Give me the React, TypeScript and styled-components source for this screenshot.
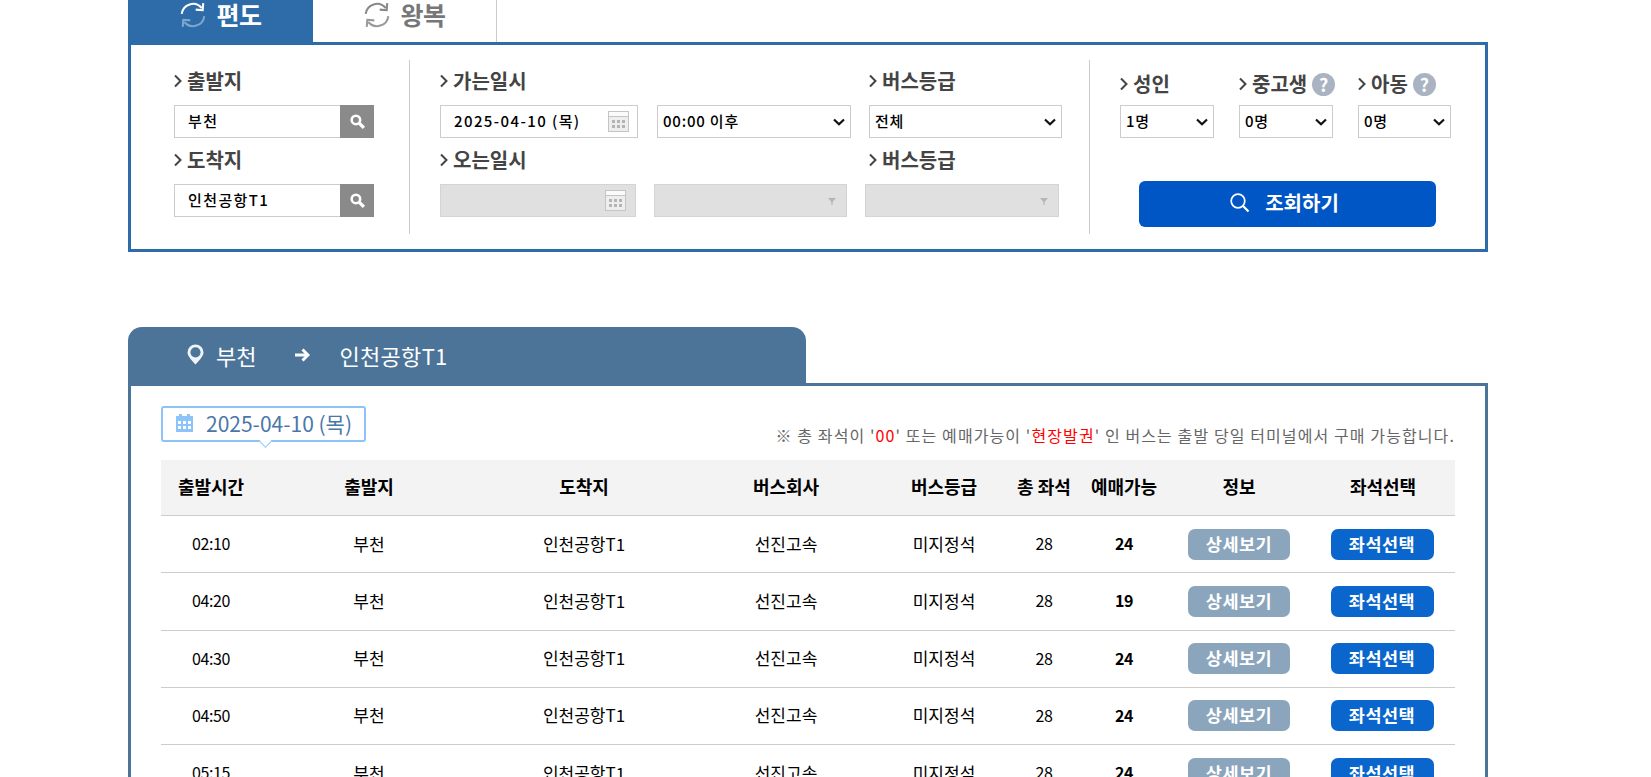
import styled, { createGlobalStyle } from "styled-components";

const FONT = `"Noto Sans CJK KR", "Noto Sans", "Liberation Sans", sans-serif`;

const SELECT_ARROW = `url("data:image/svg+xml,%3Csvg xmlns='http://www.w3.org/2000/svg' width='12' height='8' viewBox='0 0 12 8'%3E%3Cpath d='M1 1.5 L6 6.3 L11 1.5' fill='none' stroke='%23111' stroke-width='2.2'/%3E%3C/svg%3E")`;

const GlobalStyle = createGlobalStyle`
  html, body {
    margin: 0;
    padding: 0;
    height: 100%;
    overflow: hidden;
    background: #fff;
  }
  body {
    font-family: ${FONT};
    color: #000;
  }
  * {
    box-sizing: border-box;
  }
`;

const Page = styled.div`
  width: 1360px;
  margin-left: 128px;
`;

const TabBar = styled.div`
  display: flex;
  height: 42px;
`;

const Tab = styled.div<{ $active?: boolean }>`
  width: ${(p) => (p.$active ? "185px" : "184px")};
  display: flex;
  align-items: flex-start;
  justify-content: center;
  gap: 9px;
  padding-top: 1px;
  font-size: 25px;
  line-height: 26px;
  font-weight: 700;
  letter-spacing: -0.5px;
  background: ${(p) => (p.$active ? "#2d6ca8" : "#fff")};
  color: ${(p) => (p.$active ? "#fff" : "#777")};
  border-right: ${(p) => (p.$active ? "0" : "1px solid #ccc")};
`;

const SearchPanel = styled.div`
  display: flex;
  height: 210px;
  border: 3px solid #2d6ca8;
  padding-top: 15px;
`;

const Column = styled.div<{ $width: number; $pad: number; $last?: boolean }>`
  width: ${(p) => p.$width}px;
  height: 174px;
  padding: 9px 0 0 ${(p) => p.$pad}px;
  border-right: ${(p) => (p.$last ? "0" : "1px solid #ccc")};
  display: flex;
  flex-direction: column;
`;

const Label = styled.div`
  display: flex;
  align-items: center;
  gap: 5px;
  height: 24px;
  font-size: 20px;
  line-height: 22px;
  font-weight: 700;
  color: #444;
  white-space: nowrap;
`;

const LabelRow = styled.div`
  display: grid;
  grid-template-columns: 429px 1fr;
  margin-bottom: 12px;
`;

const LabelGap = styled.div`
  margin-bottom: 12px;
`;

const FieldRow = styled.div<{ $cols: string }>`
  display: grid;
  grid-template-columns: ${(p) => p.$cols};
  height: 33px;
  margin-bottom: 10px;
`;

const SearchField = styled.div`
  display: flex;
  width: 200px;
  height: 33px;
  margin-bottom: 10px;
  border: 1px solid #ccc;
  background: #fff;
`;

const TextInput = styled.input`
  flex: 1;
  min-width: 0;
  border: 0;
  outline: 0;
  padding: 0 0 2px 13px;
  background: transparent;
  font-family: ${FONT};
  font-size: 15px;
  font-weight: 500;
  letter-spacing: 1.4px;
  color: #000;
`;

const SearchButton = styled.button`
  width: 34px;
  margin: -1px -1px -1px 0;
  border: 0;
  padding: 0;
  background: #8a8a8a;
  display: flex;
  align-items: center;
  justify-content: center;
`;

const DateBox = styled.div`
  display: flex;
  align-items: center;
  height: 33px;
  padding-right: 8px;
  border: 1px solid #ccc;
  background: #fff;
`;

const DisabledBox = styled.div`
  display: flex;
  align-items: center;
  justify-content: flex-end;
  height: 33px;
  padding-right: 9px;
  border: 1px solid #d4d4d4;
  background: #e0e0e0;
`;

const Select = styled.select`
  width: 100%;
  height: 33px;
  border: 1px solid #ccc;
  border-radius: 0;
  outline: 0;
  appearance: none;
  padding: 0 0 2px 5px;
  background: #fff ${SELECT_ARROW} no-repeat right 5px center;
  font-family: ${FONT};
  font-size: 15px;
  font-weight: 500;
  letter-spacing: 0.8px;
  color: #000;
`;

const PeopleLabels = styled.div`
  display: grid;
  grid-template-columns: repeat(3, 119px);
  margin-top: 3px;
  margin-bottom: 9px;
`;

const PeopleSelects = styled.div`
  display: grid;
  grid-template-columns: repeat(3, 119px);
`;

const PeopleSelect = styled(Select)`
  width: 94px;

  &:last-child {
    width: 93px;
  }
`;

const HelpBadge = styled.span`
  width: 23px;
  height: 23px;
  border-radius: 50%;
  background: #a9b3c2;
  color: #fff;
  font-size: 18px;
  line-height: 23px;
  font-weight: 700;
  text-align: center;
`;

const QueryButton = styled.button`
  width: 297px;
  height: 46px;
  margin: 43px 0 0 19px;
  padding: 0 6px 3px 0;
  border: 0;
  border-radius: 6px;
  background: #0056c4;
  color: #fff;
  display: flex;
  align-items: center;
  justify-content: center;
  gap: 15px;
  font-family: ${FONT};
  font-size: 20px;
  font-weight: 700;
`;

const RouteTab = styled.div`
  width: 678px;
  height: 57px;
  margin-top: 75px;
  padding: 0 0 2px 59px;
  border-radius: 14px 14px 0 0;
  background: #4c7499;
  color: #fff;
  display: flex;
  align-items: center;
  font-size: 22px;
  font-weight: 400;
`;

const RoutePlace = styled.span`
  margin-left: 12px;
`;

const RouteArrow = styled.span`
  display: flex;
  margin: 0 29px 0 39px;
`;

const RouteDestination = styled.span`
  letter-spacing: 0.3px;
`;

const ResultPanel = styled.div`
  margin-top: -1px;
  padding: 20px 30px 0;
  border: 3px solid #4c7499;
  border-bottom: 0;
  height: 480px;
`;

const ResultTop = styled.div`
  display: flex;
  justify-content: space-between;
  height: 54px;
`;

const DateBadge = styled.div`
  position: relative;
  width: 205px;
  height: 36px;
  border: 2px solid #8cc4fa;
  border-radius: 3px;
  padding: 0 0 2px 13px;
  display: flex;
  align-items: center;
  gap: 13px;
  color: #4b77a8;
  font-size: 21px;
  white-space: nowrap;

  &::after {
    content: "";
    position: absolute;
    left: 98px;
    bottom: -6px;
    width: 8px;
    height: 8px;
    background: #fff;
    border-right: 1px solid #8cc4fa;
    border-bottom: 1px solid #8cc4fa;
    transform: rotate(45deg);
  }
`;

const Notice = styled.div`
  align-self: flex-end;
  margin-bottom: 14px;
  font-size: 16px;
  line-height: 22px;
  letter-spacing: 1.1px;
  color: #666;
  white-space: nowrap;
`;

const Red = styled.span`
  color: #f00;
`;

const COLUMNS = "100px 216px 214px 190px 126px 74px 86px 144px 144px";

const HeaderRow = styled.div`
  display: grid;
  grid-template-columns: ${COLUMNS};
  height: 56px;
  align-items: center;
  padding-bottom: 3px;
  background: #f3f3f3;
  border-bottom: 1px solid #ccc;
  font-size: 18px;
  font-weight: 700;
  text-align: center;
  white-space: nowrap;
`;

const Row = styled.div`
  display: grid;
  grid-template-columns: ${COLUMNS};
  height: 57.25px;
  align-items: center;
  border-bottom: 1px solid #ccc;
  font-size: 17px;
  text-align: center;
`;

const TextCell = styled.div`
  padding-bottom: 2px;
`;

const NumberCell = styled(TextCell)<{ $bold?: boolean }>`
  font-size: 16px;
  letter-spacing: -0.4px;
  font-weight: ${(p) => (p.$bold ? 700 : 400)};
`;

const RowButton = styled.button<{ $primary?: boolean }>`
  justify-self: center;
  width: ${(p) => (p.$primary ? "103px" : "102px")};
  height: 31px;
  margin-right: ${(p) => (p.$primary ? "2px" : "0")};
  border: 0;
  border-radius: 7px;
  padding: 0 0 2px;
  background: ${(p) => (p.$primary ? "#0a66cc" : "#8ba5bd")};
  color: #fff;
  font-family: ${FONT};
  font-size: 17.5px;
  font-weight: 700;
  letter-spacing: 0.5px;
`;

function Chevron() {
  return (
    <svg width="8" height="14" viewBox="0 0 8 14">
      <path d="M1 1.5 L6.5 7 L1 12.5" fill="none" stroke="#444" strokeWidth="2" />
    </svg>
  );
}

function RefreshIcon({ top, bottom }: { top: string; bottom: string }) {
  return (
    <svg width="28" height="28" viewBox="0 0 26 26" fill="none" strokeWidth="1.9">
      <path d="M2.5 12 A10.5 10.5 0 0 1 21 6.5" stroke={top} />
      <path d="M22.5 2 L22 8.5 L15.5 8" stroke={top} />
      <path d="M23.5 14 A10.5 10.5 0 0 1 5 19.5" stroke={bottom} />
      <path d="M3.5 24 L4 17.5 L10.5 18" stroke={bottom} />
    </svg>
  );
}

function SearchGlyph() {
  return (
    <svg width="17" height="17" viewBox="0 0 16 16" fill="none">
      <circle cx="6.5" cy="6.5" r="4" stroke="#fff" strokeWidth="2.4" />
      <path d="M9.8 9.8 L14 14" stroke="#fff" strokeWidth="3.2" />
    </svg>
  );
}

function CalendarIcon() {
  return (
    <svg width="21" height="21" viewBox="0 0 21 21" style={{ flexShrink: 0 }}>
      <rect x="0.5" y="0.5" width="20" height="20" fill="#eee" stroke="#c4c4c4" />
      <rect x="1" y="1" width="19" height="4" fill="#fafafa" />
      <path d="M1 5.5 H20" stroke="#c4c4c4" />
      <path
        d="M4 9h3v3H4zM9 9h3v3H9zM14 9h3v3h-3zM4 14h3v3H4zM9 14h3v3H9zM14 14h3v3h-3z"
        fill="#b4b4b4"
      />
    </svg>
  );
}

function DownTriangle() {
  return (
    <svg width="10" height="10" viewBox="0 0 10 10">
      <path d="M1 2 H9 L5.6 6 V9 H4.4 V6 Z" fill="#b5b5b5" />
    </svg>
  );
}

function QueryIcon() {
  return (
    <svg width="20" height="20" viewBox="0 0 20 20" fill="none" stroke="#fff" strokeWidth="1.7">
      <circle cx="8" cy="8" r="6.8" />
      <path d="M12.8 12.8 L18.5 18.5" strokeWidth="2.2" />
    </svg>
  );
}

function PinIcon() {
  return (
    <svg width="17" height="21" viewBox="0 0 17 21">
      <path
        fillRule="evenodd"
        d="M8.5 0.5 A8 8 0 0 1 16.5 8.5 C16.5 12 11.5 17.5 8.5 20.5 C5.5 17.5 0.5 12 0.5 8.5 A8 8 0 0 1 8.5 0.5 Z M8.5 3.2 A5.1 5.1 0 1 0 8.5 13.4 A5.1 5.1 0 1 0 8.5 3.2 Z"
        fill="#f0f4f8"
      />
    </svg>
  );
}

function ArrowIcon() {
  return (
    <svg width="15" height="14" viewBox="0 0 15 14" fill="none" stroke="#fff" strokeWidth="3">
      <path d="M0 7 H13" />
      <path d="M7.5 1.5 L13 7 L7.5 12.5" />
    </svg>
  );
}

function BadgeCalendar() {
  return (
    <svg width="17" height="18" viewBox="0 0 17 18" style={{ flexShrink: 0 }}>
      <path fill="#8cc4fa" d="M3 0h3v3H3zM11 0h3v3h-3zM0 2h17v16H0z" />
      <path
        fill="#fff"
        d="M2 7h3v3H2zM7 7h3v3H7zM12 7h3v3h-3zM2 12h3v3H2zM7 12h3v3H7zM12 12h3v3h-3z"
      />
    </svg>
  );
}

const trips = [
  { time: "02:10", seats: 24 },
  { time: "04:20", seats: 19 },
  { time: "04:30", seats: 24 },
  { time: "04:50", seats: 24 },
  { time: "05:15", seats: 24 },
];

export default function App() {
  return (
    <Page>
      <GlobalStyle />
      <TabBar>
        <Tab $active>
          <RefreshIcon top="#fff" bottom="#7fa6cc" />
          편도
        </Tab>
        <Tab>
          <RefreshIcon top="#888" bottom="#999" />
          왕복
        </Tab>
      </TabBar>

      <SearchPanel>
        <Column $width={279} $pad={43}>
          <LabelGap>
            <Label>
              <Chevron />
              출발지
            </Label>
          </LabelGap>
          <SearchField>
            <TextInput defaultValue="부천" />
            <SearchButton>
              <SearchGlyph />
            </SearchButton>
          </SearchField>
          <LabelGap>
            <Label>
              <Chevron />
              도착지
            </Label>
          </LabelGap>
          <SearchField>
            <TextInput defaultValue="인천공항T1" />
            <SearchButton>
              <SearchGlyph />
            </SearchButton>
          </SearchField>
        </Column>

        <Column $width={680} $pad={30}>
          <LabelRow>
            <Label>
              <Chevron />
              가는일시
            </Label>
            <Label>
              <Chevron />
              버스등급
            </Label>
          </LabelRow>
          <FieldRow $cols="198px 19px 194px 18px 193px">
            <DateBox>
              <TextInput defaultValue="2025-04-10 (목)" />
              <CalendarIcon />
            </DateBox>
            <span />
            <Select defaultValue="00:00 이후">
              <option>00:00 이후</option>
            </Select>
            <span />
            <Select defaultValue="전체">
              <option>전체</option>
            </Select>
          </FieldRow>
          <LabelRow>
            <Label>
              <Chevron />
              오는일시
            </Label>
            <Label>
              <Chevron />
              버스등급
            </Label>
          </LabelRow>
          <FieldRow $cols="196px 18px 193px 18px 194px">
            <DisabledBox>
              <CalendarIcon />
            </DisabledBox>
            <span />
            <DisabledBox>
              <DownTriangle />
            </DisabledBox>
            <span />
            <DisabledBox>
              <DownTriangle />
            </DisabledBox>
          </FieldRow>
        </Column>

        <Column $width={395} $pad={30} $last>
          <PeopleLabels>
            <Label>
              <Chevron />
              성인
            </Label>
            <Label>
              <Chevron />
              중고생
              <HelpBadge>?</HelpBadge>
            </Label>
            <Label>
              <Chevron />
              아동
              <HelpBadge>?</HelpBadge>
            </Label>
          </PeopleLabels>
          <PeopleSelects>
            <PeopleSelect defaultValue="1명">
              <option>1명</option>
            </PeopleSelect>
            <PeopleSelect defaultValue="0명">
              <option>0명</option>
            </PeopleSelect>
            <PeopleSelect defaultValue="0명">
              <option>0명</option>
            </PeopleSelect>
          </PeopleSelects>
          <QueryButton>
            <QueryIcon />
            조회하기
          </QueryButton>
        </Column>
      </SearchPanel>

      <RouteTab>
        <PinIcon />
        <RoutePlace>부천</RoutePlace>
        <RouteArrow>
          <ArrowIcon />
        </RouteArrow>
        <RouteDestination>인천공항T1</RouteDestination>
      </RouteTab>

      <ResultPanel>
        <ResultTop>
          <DateBadge>
            <BadgeCalendar />
            2025-04-10 (목)
          </DateBadge>
          <Notice>
            ※ 총 좌석이 '<Red>00</Red>' 또는 예매가능이 '<Red>현장발권</Red>' 인 버스는 출발 당일
            터미널에서 구매 가능합니다.
          </Notice>
        </ResultTop>
        <HeaderRow>
          <div>출발시간</div>
          <div>출발지</div>
          <div>도착지</div>
          <div>버스회사</div>
          <div>버스등급</div>
          <div>총 좌석</div>
          <div>예매가능</div>
          <div>정보</div>
          <div>좌석선택</div>
        </HeaderRow>
        {trips.map((trip) => (
          <Row key={trip.time}>
            <NumberCell>{trip.time}</NumberCell>
            <TextCell>부천</TextCell>
            <TextCell>인천공항T1</TextCell>
            <TextCell>선진고속</TextCell>
            <TextCell>미지정석</TextCell>
            <NumberCell>28</NumberCell>
            <NumberCell $bold>{trip.seats}</NumberCell>
            <RowButton>상세보기</RowButton>
            <RowButton $primary>좌석선택</RowButton>
          </Row>
        ))}
      </ResultPanel>
    </Page>
  );
}
